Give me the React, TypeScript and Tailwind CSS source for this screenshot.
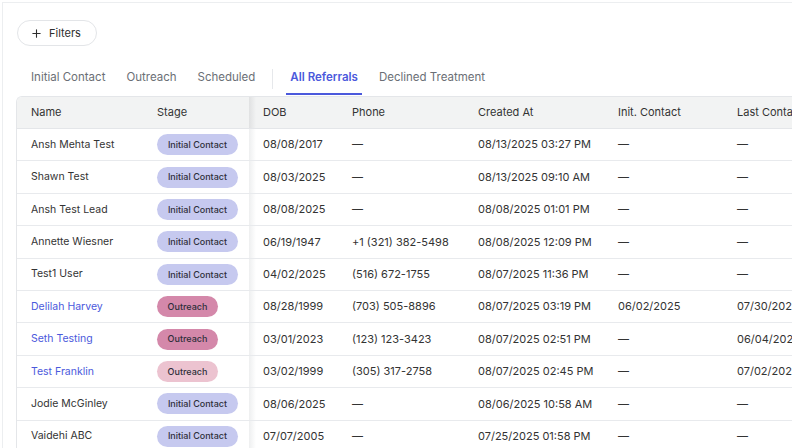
import React from 'react';

type Stage = 'initial' | 'outreach' | 'outreachLight';

type Referral = {
  name: string;
  link?: boolean;
  stage: Stage;
  dob: string;
  phone: string;
  createdAt: string;
  initContact: string;
  lastContact: string;
};

const referrals: Referral[] = [
  { name: 'Ansh Mehta Test', stage: 'initial', dob: '08/08/2017', phone: '—', createdAt: '08/13/2025 03:27 PM', initContact: '—', lastContact: '—' },
  { name: 'Shawn Test', stage: 'initial', dob: '08/03/2025', phone: '—', createdAt: '08/13/2025 09:10 AM', initContact: '—', lastContact: '—' },
  { name: 'Ansh Test Lead', stage: 'initial', dob: '08/08/2025', phone: '—', createdAt: '08/08/2025 01:01 PM', initContact: '—', lastContact: '—' },
  { name: 'Annette Wiesner', stage: 'initial', dob: '06/19/1947', phone: '+1 (321) 382-5498', createdAt: '08/08/2025 12:09 PM', initContact: '—', lastContact: '—' },
  { name: 'Test1 User', stage: 'initial', dob: '04/02/2025', phone: '(516) 672-1755', createdAt: '08/07/2025 11:36 PM', initContact: '—', lastContact: '—' },
  { name: 'Delilah Harvey', link: true, stage: 'outreach', dob: '08/28/1999', phone: '(703) 505-8896', createdAt: '08/07/2025 03:19 PM', initContact: '06/02/2025', lastContact: '07/30/2025' },
  { name: 'Seth Testing', link: true, stage: 'outreach', dob: '03/01/2023', phone: '(123) 123-3423', createdAt: '08/07/2025 02:51 PM', initContact: '—', lastContact: '06/04/2025' },
  { name: 'Test Franklin', link: true, stage: 'outreachLight', dob: '03/02/1999', phone: '(305) 317-2758', createdAt: '08/07/2025 02:45 PM', initContact: '—', lastContact: '07/02/2025' },
  { name: 'Jodie McGinley', stage: 'initial', dob: '08/06/2025', phone: '—', createdAt: '08/06/2025 10:58 AM', initContact: '—', lastContact: '—' },
  { name: 'Vaidehi ABC', stage: 'initial', dob: '07/07/2005', phone: '—', createdAt: '07/25/2025 01:58 PM', initContact: '—', lastContact: '—' },
];

const StageBadge: React.FC<{ stage: Stage }> = ({ stage }) => {
  if (stage === 'initial') {
    return (
      <span className="flex h-[21px] w-[81px] items-center justify-center rounded-full bg-[#c6c9ef] text-[9px] font-medium text-[#2f2f3a]">
        Initial Contact
      </span>
    );
  }
  return (
    <span
      className={
        stage === 'outreach'
          ? 'flex h-[21px] w-[61px] items-center justify-center rounded-full bg-[#d488aa] text-[9px] font-medium text-[#2f2f3a]'
          : 'flex h-[21px] w-[61px] items-center justify-center rounded-full bg-[#ecc3d0] text-[9px] font-medium text-[#2f2f3a]'
      }
    >
      Outreach
    </span>
  );
};

const tabs = ['Initial Contact', 'Outreach', 'Scheduled'];

const App: React.FC = () => {
  return (
    <div
      className="h-[448px] w-[792px] overflow-hidden bg-white"
      style={{ fontFamily: 'Inter, "Noto Sans", sans-serif' }}
    >
      <div className="ml-[2px] mt-[2px] h-full border-l border-t border-[#eceef0] pl-[13px] pt-[17px]">
        {/* Filters */}
        <button className="ml-px flex h-[26px] w-[80px] items-center gap-[7px] rounded-full border border-[#e3e5e8] pl-[13px] text-[11px] text-[#2e2e2e]">
          <svg className="h-[11px] w-[11px]" viewBox="0 0 24 24" fill="none" stroke="currentColor" strokeWidth={2.4} strokeLinecap="round">
            <path d="M12 4v16M4 12h16" />
          </svg>
          Filters
        </button>

        {/* Tabs */}
        <div className="mt-[16px] flex h-[33px] items-stretch gap-[13px] pl-[11px] text-[11.5px]">
          {tabs.map((t) => (
            <div key={t} className="flex items-center border-b-2 border-transparent px-[4px] text-[#6b6f76]">
              {t}
            </div>
          ))}
          <div className="my-auto h-[20px] w-px bg-[#e6e8eb]" />
          <div className="flex items-center border-b-2 border-[#4b59dc] px-[4px] font-semibold text-[#4b59dc]">
            All Referrals
          </div>
          <div className="flex items-center border-b-2 border-transparent px-[4px] text-[#6b6f76]">
            Declined Treatment
          </div>
        </div>

        {/* Table */}
        <div className="mt-[1px] w-[900px] overflow-hidden rounded-tl-[6px] border-l border-t border-[#e4e6e9] text-[11px] text-[#333]">
          <div className="flex h-[32px] items-center border-b border-[#e4e6e9] bg-[#f2f3f3]">
            <div className="w-[126px] pl-[14px]">Name</div>
            <div className="w-[106px] pl-[14px]">Stage</div>
            <div className="h-full w-[7px] bg-gradient-to-r from-[#e0e1e2] to-[#f2f3f3]" />
            <div className="w-[82px] pl-[7px]">DOB</div>
            <div className="w-[126px] pl-[14px]">Phone</div>
            <div className="w-[140px] pl-[14px]">Created At</div>
            <div className="w-[119px] pl-[14px]">Init. Contact</div>
            <div className="w-[150px] pl-[14px]">Last Contact</div>
          </div>
          {referrals.map((r) => (
            <div key={r.name} className="flex h-[32.4px] items-center border-b border-[#e8eaed] bg-white">
              <div className={r.link ? 'w-[126px] pl-[14px] text-[10.5px] text-[#4b59dc]' : 'w-[126px] pl-[14px] text-[10.5px]'}>
                {r.name}
              </div>
              <div className="w-[106px] pl-[14px]">
                <StageBadge stage={r.stage} />
              </div>
              <div className="h-full w-[7px] bg-gradient-to-r from-[#eeeff0] to-white" />
              <div className="w-[82px] pl-[7px]">{r.dob}</div>
              <div className="w-[126px] pl-[14px]">{r.phone}</div>
              <div className="w-[140px] pl-[14px]">{r.createdAt}</div>
              <div className="w-[119px] pl-[14px]">{r.initContact}</div>
              <div className="w-[150px] pl-[14px]">{r.lastContact}</div>
            </div>
          ))}
        </div>
      </div>
    </div>
  );
};

export default App;
